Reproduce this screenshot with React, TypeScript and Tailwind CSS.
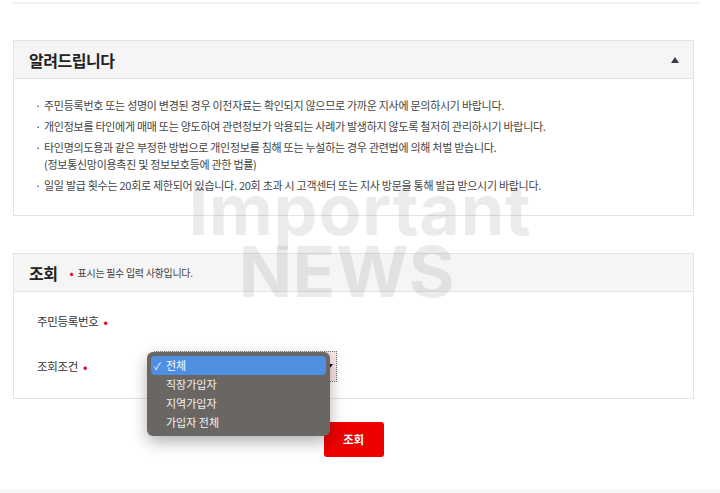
import React from 'react';

const notices = [
  ['주민등록번호 또는 성명이 변경된 경우 이전자료는 확인되지 않으므로 가까운 지사에 문의하시기 바랍니다.'],
  ['개인정보를 타인에게 매매 또는 양도하여 관련정보가 악용되는 사례가 발생하지 않도록 철저히 관리하시기 바랍니다.'],
  ['타인명의도용과 같은 부정한 방법으로 개인정보를 침해 또는 누설하는 경우 관련법에 의해 처벌 받습니다.', '(정보통신망이용촉진 및 정보보호등에 관한 법률)'],
  ['일일 발급 횟수는 20회로 제한되어 있습니다. 20회 초과 시 고객센터 또는 지사 방문을 통해 발급 받으시기 바랍니다.'],
];

const options = ['전체', '직장가입자', '지역가입자', '가입자 전체'];

const Required = () => <span className="ml-[5px] text-[13px] leading-none text-[#e60012]">•</span>;

export default function App() {
  return (
    <div
      className="relative h-[493px] w-[720px] overflow-hidden bg-white text-[#333]"
      style={{ fontFamily: '"Noto Sans CJK KR", "Noto Sans", sans-serif' }}
    >
      {/* previous card edge */}
      <div className="ml-[12px] h-[3px] w-[688px] rounded-b-[3px] border-b border-[#ececec] shadow-[0_1px_2px_rgba(0,0,0,0.05)]" />

      {/* Notice panel */}
      <section className="ml-[13px] mt-[37px] w-[681px] border border-[#e4e4e4]">
        <div className="flex h-[38px] items-center justify-between border-b border-[#e4e4e4] bg-[#f5f5f5] pl-[15px] pr-[14px]">
          <h2 className="text-[16px] font-bold tracking-[-0.03em] text-[#222]">알려드립니다</h2>
          <span className="h-0 w-0 border-x-[4px] border-b-[6px] border-x-transparent border-b-[#343a50]" />
        </div>
        <ul className="flex flex-col gap-[4px] pb-[21px] pl-[21px] pt-[18px] text-[11px] leading-[17px] tracking-[-0.025em] text-[#444]">
          {notices.map((lines, i) => (
            <li key={i} className="flex">
              <span className="w-[9px] shrink-0">·</span>
              <div>
                {lines.map((l) => (
                  <p key={l}>{l}</p>
                ))}
              </div>
            </li>
          ))}
        </ul>
      </section>

      {/* Query panel */}
      <section className="ml-[13px] mt-[37px] w-[681px] border border-[#e4e4e4]">
        <div className="flex h-[38px] items-center border-b border-[#e4e4e4] bg-[#f5f5f5] pl-[15px]">
          <h2 className="text-[16px] font-bold tracking-[-0.03em] text-[#222]">조회</h2>
          <span className="ml-[12px] text-[12px] leading-none text-[#e60012]">•</span>
          <span className="ml-[4px] text-[10px] tracking-[-0.03em] text-[#444]">표시는 필수 입력 사항입니다.</span>
        </div>
        <div className="flex flex-col pb-[16px] pl-[23px] pt-[16px] text-[11.5px] tracking-[-0.03em] text-[#333]">
          <div className="flex h-[27px] items-center">
            <span>주민등록번호</span>
            <Required />
          </div>
          <div className="mt-[16px] flex h-[31px] items-center">
            <div className="flex w-[117px] items-center">
              <span>조회조건</span>
              <Required />
            </div>
            <div className="relative h-[31px] w-[183px] border border-dotted border-[#777] bg-[#fbe6e6]">
              <span className="absolute right-[3px] top-[12px] h-0 w-0 border-x-[3px] border-t-[4px] border-x-transparent border-t-black" />
            </div>
          </div>
        </div>
      </section>

      <div className="flex w-[707px] justify-center pt-[23px]">
        <button className="h-[35px] w-[60px] rounded-[3px] bg-[#ee0000] text-[11.5px] font-bold text-white">조회</button>
      </div>

      <div className="absolute bottom-0 left-0 h-[4px] w-full bg-[#f7f7f7]" />

      {/* Watermark */}
      <div
        className="pointer-events-none absolute left-[150px] top-[178px] flex w-[420px] flex-col items-center text-black/[0.08]"
        style={{ fontFamily: 'Inter, "Liberation Sans", sans-serif' }}
      >
        <span className="text-[70px] font-bold leading-[64px] tracking-[0.01em]">Important</span>
        <span className="-ml-[26px] text-[70px] font-bold leading-[60px] tracking-[0.01em]">NEWS</span>
      </div>

      {/* Opened select menu */}
      <div className="absolute left-[147px] top-[352px] w-[183px] rounded-[6px] bg-[#6a6664] p-[4px] text-[11px] leading-[19px] text-[#f2f2f2] shadow-[0_6px_16px_rgba(0,0,0,0.3)]">
        {options.map((o, i) => (
          <div
            key={o}
            className={`flex h-[19px] items-center rounded-[4px] ${i === 0 ? 'bg-[#4f8fe2] text-white' : ''}`}
          >
            <span className="w-[15px] pl-[3px] text-[10px]">{i === 0 ? '✓' : ''}</span>
            <span>{o}</span>
          </div>
        ))}
      </div>
    </div>
  );
}
